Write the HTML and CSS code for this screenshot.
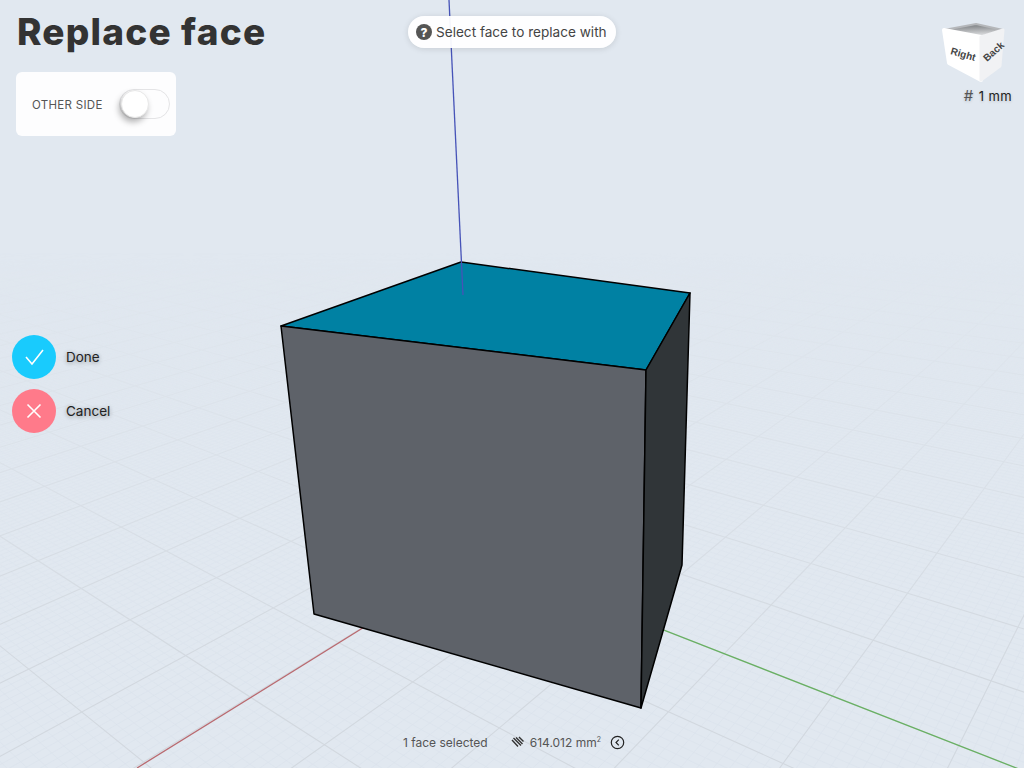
FILE: index.html
```html
<!DOCTYPE html>
<html lang="en">
<head>
    <meta charset="UTF-8">
    <meta name="viewport" content="width=device-width, initial-scale=1.0">
    <title>Replace face</title>
    <link rel="stylesheet" href="styles.css">
</head>
<body>
    <div class="app">
        <svg class="grid" id="grid" viewBox="0 0 1024 768"></svg>
        <svg class="scene" viewBox="0 0 1024 768">
            <line class="axis-red" x1="477" y1="557" x2="137" y2="768"/>
            <line class="axis-green" x1="477" y1="557" x2="1024" y2="771"/>
            <polygon class="face-top" points="461,262 690,293 646,370 281,326"/>
            <polygon class="face-front" points="281,326 646,370 641,708 314,614"/>
            <polygon class="face-right" points="646,370 690,293 682,565 641,708"/>
            <line class="axis-blue" x1="449" y1="0" x2="463" y2="295"/>
        </svg>

        <div class="ui">
            <div class="side">
                <h1 class="title">Replace face</h1>
                <div class="panel">
                    <span class="panel-label">OTHER SIDE</span>
                    <div class="toggle"><div class="knob"></div></div>
                </div>
                <div class="actions">
                    <div class="action">
                        <div class="action-btn done">
                            <svg width="24" height="24" viewBox="0 0 24 24"><polyline points="4,12 10,19 21,5"/></svg>
                        </div>
                        <span>Done</span>
                    </div>
                    <div class="action">
                        <div class="action-btn cancel">
                            <svg width="24" height="24" viewBox="0 0 24 24"><path d="M5.5 5.5 L18.5 18.5 M18.5 5.5 L5.5 18.5"/></svg>
                        </div>
                        <span>Cancel</span>
                    </div>
                </div>
            </div>
            <div class="status">
                <span>1 face selected</span>
                <span class="area">
                    <svg class="hatch" width="14" height="14" viewBox="0 0 14 14">
                        <path d="M1 5 L7 11.5 M2.5 3 L10 10.5 M5 2.5 L11.5 9 M8 2 L12.5 6.5"/>
                    </svg>
                    <span>614.012 mm<sup>2</sup></span>
                </span>
                <svg class="collapse" width="15" height="15" viewBox="0 0 15 15">
                    <circle cx="7.5" cy="7.5" r="6.2"/>
                    <polyline points="8.8,4.6 6,7.5 8.8,10.4"/>
                </svg>
            </div>
        </div>

        <div class="hint">
            <span class="hint-icon">?</span>
            <span>Select face to replace with</span>
        </div>

        <div class="viewcube">
            <svg width="66" height="68" viewBox="940 19 66 68">
                <defs>
                    <linearGradient id="cubeTop" x1="0" y1="0" x2="0.15" y2="1">
                        <stop offset="0" stop-color="#6f7275"/>
                        <stop offset="1" stop-color="#e4e5e7"/>
                    </linearGradient>
                </defs>
                <polygon class="cube-top" points="944,30 976,24 1003,30 981,37"/>
                <polygon class="cube-left" points="944,30 981,37 981,80 949,63"/>
                <polygon class="cube-right" points="981,37 1003,30 1000,66 981,80"/>
                <text class="cube-label" transform="translate(950 54) rotate(16)">Right</text>
                <text class="cube-label" transform="translate(987 62) rotate(-42)">Back</text>
            </svg>
            <div class="grid-size"><span class="grid-mark">#</span><span>1 mm</span></div>
        </div>
    </div>
    <script src="grid.js"></script>
</body>
</html>
```

FILE: styles.css
```css
* {
    margin: 0;
    padding: 0;
    box-sizing: border-box;
}

body {
    width: 1024px;
    height: 768px;
    overflow: hidden;
    font-family: "Inter", "Liberation Sans", sans-serif;
    color: #333;
}

.app {
    position: relative;
    width: 1024px;
    height: 768px;
    background: #e1e8f0;
}

/* 3d viewport */
.grid,
.scene {
    position: absolute;
    left: 0;
    top: 0;
    width: 1024px;
    height: 768px;
}

.grid {
    -webkit-mask-image: linear-gradient(to bottom, transparent 250px, rgba(0, 0, 0, 0.4) 450px, #000 680px);
    mask-image: linear-gradient(to bottom, transparent 250px, rgba(0, 0, 0, 0.4) 450px, #000 680px);
}

.grid .minor {
    stroke: #d9e1ea;
    stroke-width: 0.5;
}

.grid .major {
    stroke: #d2d8df;
    stroke-width: 1.1;
}

.axis-red {
    stroke: #b96a70;
    stroke-width: 1.3;
}

.axis-green {
    stroke: #69b063;
    stroke-width: 1.3;
}

.axis-blue {
    stroke: #4653b8;
    stroke-width: 1.3;
}

.face-top,
.face-front,
.face-right {
    stroke: #000;
    stroke-width: 1.5;
    stroke-linejoin: round;
}

.face-top {
    fill: #0081a3;
}

.face-front {
    fill: #5e6269;
}

.face-right {
    fill: #303538;
}

/* overlay */
.ui {
    position: absolute;
    left: 0;
    top: 0;
    width: 1024px;
    height: 768px;
    display: flex;
    flex-direction: column;
}

.side {
    flex: 1;
    padding: 10px 12px 0;
}

.title {
    margin-left: 5px;
    font-size: 37px;
    line-height: 44px;
    font-weight: 800;
    letter-spacing: 1.2px;
    color: #333;
}

.panel {
    display: flex;
    align-items: center;
    justify-content: space-between;
    width: 160px;
    height: 64px;
    margin: 18px 0 0 4px;
    padding: 0 6px 0 16px;
    background: #fdfdfe;
    border-radius: 6px;
}

.panel-label {
    padding-top: 1px;
    font-size: 11.5px;
    color: #555;
    letter-spacing: 0.3px;
}

.toggle {
    width: 51px;
    height: 30px;
    padding: 1px;
    background: #fdfdfe;
    border: 1px solid #e4e4e6;
    border-radius: 15px;
}

.knob {
    width: 28px;
    height: 28px;
    margin-top: -1px;
    background: #fff;
    border: 1px solid #e8e8e8;
    border-radius: 50%;
    box-shadow: -2px 4px 6px rgba(0, 0, 0, 0.3);
}

.actions {
    display: flex;
    flex-direction: column;
    gap: 10px;
    margin-top: 199px;
}

.action {
    display: flex;
    align-items: center;
    gap: 10px;
    font-size: 13.5px;
    color: #222;
    text-shadow: 0 1px 4px rgba(0, 0, 0, 0.4);
}

.action-btn {
    display: flex;
    align-items: center;
    justify-content: center;
    width: 44px;
    height: 44px;
    border-radius: 50%;
}

.action-btn svg {
    fill: none;
    stroke: #fff;
    stroke-width: 1.6;
}

.done {
    background: #19cbfd;
}

.cancel {
    background: #ff7a8a;
}

.status {
    display: flex;
    align-items: center;
    justify-content: center;
    height: 26px;
    margin-bottom: 13px;
    padding-left: 4px;
    font-size: 12px;
    color: #555;
}

.area {
    display: flex;
    align-items: center;
    gap: 5px;
    margin-left: 23px;
}

.area sup {
    font-size: 7px;
    line-height: 0;
}

.hatch path {
    stroke: #333;
    stroke-width: 1.4;
    fill: none;
}

.collapse {
    margin-left: 9px;
}

.collapse circle,
.collapse polyline {
    fill: none;
    stroke: #222;
    stroke-width: 1.2;
}

.hint {
    position: absolute;
    left: 408px;
    top: 16px;
    display: flex;
    align-items: center;
    gap: 4px;
    width: 208px;
    height: 32px;
    padding-left: 8px;
    font-size: 13.6px;
    color: #444;
    background: rgba(255, 255, 255, 0.94);
    border-radius: 16px;
    box-shadow: 0 1px 6px rgba(0, 0, 0, 0.12);
}

.hint-icon {
    display: flex;
    align-items: center;
    justify-content: center;
    width: 16px;
    height: 16px;
    font-size: 12px;
    font-weight: 800;
    color: #fff;
    background: #555;
    border-radius: 50%;
}

.viewcube {
    position: absolute;
    right: 12px;
    top: 19px;
    display: flex;
    flex-direction: column;
    align-items: flex-end;
}

.viewcube svg {
    margin-right: 6px;
}

.cube-top {
    fill: url(#cubeTop);
    stroke: #b5b7ba;
    stroke-width: 2;
    stroke-linejoin: round;
}

.cube-left {
    fill: #fff;
    stroke: #fff;
    stroke-width: 4;
    stroke-linejoin: round;
}

.cube-right {
    fill: #f1f2f4;
    stroke: #f1f2f4;
    stroke-width: 3;
    stroke-linejoin: round;
}

.cube-label {
    font-family: "Liberation Sans", sans-serif;
    font-size: 10px;
    font-weight: 700;
    fill: #444;
}

.grid-size {
    display: flex;
    align-items: center;
    gap: 5px;
    margin-top: -1px;
    font-size: 13px;
    letter-spacing: 0.4px;
    color: #222;
    text-shadow: 0 1px 3px rgba(0, 0, 0, 0.2);
}

.grid-mark {
    font-size: 15px;
    color: #555;
}
```

FILE: grid.js
```js
// ground plane grid: u runs along the green axis, v along the red axis
const origin = [477, 557];
const vanishGreen = [-660, 112];
const vanishRed = [1308, 46];
const limitU = 16.8;
const limitV = 13.97;

const project = (u, v) => {
    const a = u / limitU;
    const b = v / limitV;
    const w = 1 - a - b;
    return [
        (origin[0] - vanishGreen[0] * a - vanishRed[0] * b) / w,
        (origin[1] - vanishGreen[1] * a - vanishRed[1] * b) / w,
    ];
};

const grid = document.getElementById('grid');
const ns = 'http://www.w3.org/2000/svg';
const far = -30;
const near = 6;

const addLine = (from, to, cls) => {
    const line = document.createElementNS(ns, 'line');
    line.setAttribute('x1', from[0].toFixed(2));
    line.setAttribute('y1', from[1].toFixed(2));
    line.setAttribute('x2', to[0].toFixed(2));
    line.setAttribute('y2', to[1].toFixed(2));
    line.setAttribute('class', cls);
    grid.appendChild(line);
};

for (let i = far * 10; i <= near * 10; i++) {
    if (i % 10 !== 0) {
        addLine(project(i / 10, far), project(i / 10, near), 'minor');
        addLine(project(far, i / 10), project(near, i / 10), 'minor');
    }
}

// major lines go on top of the minor ones
for (let i = far; i <= near; i++) {
    addLine(project(i, far), project(i, near), 'major');
    addLine(project(far, i), project(near, i), 'major');
}
```
